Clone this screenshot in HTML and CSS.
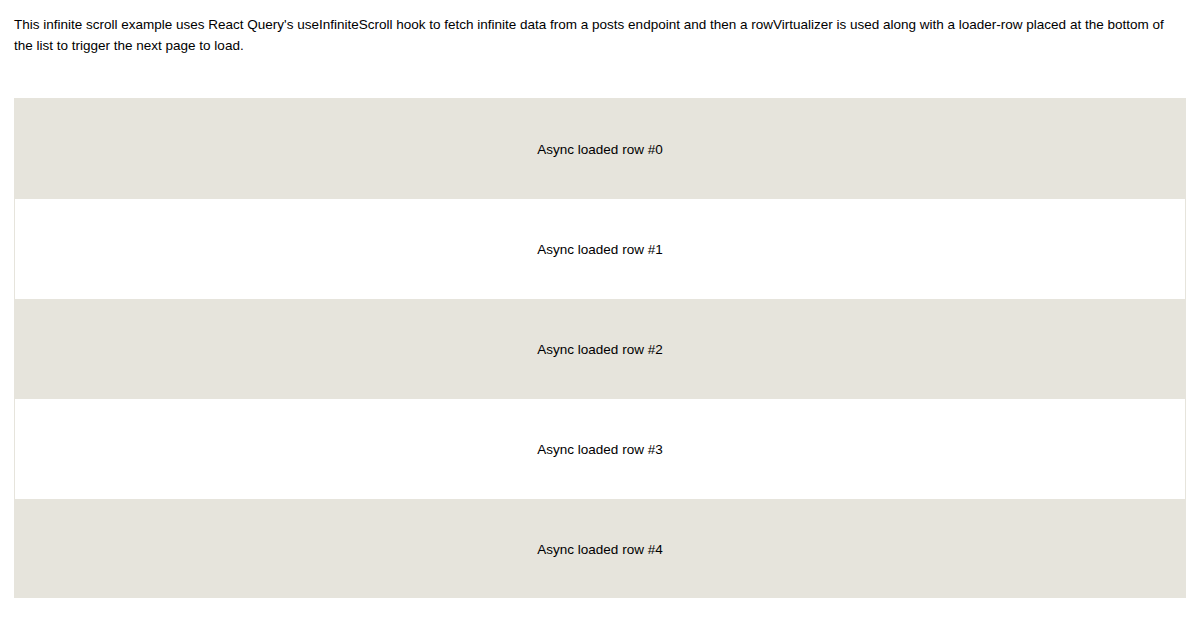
FILE: index.html
```html
<!DOCTYPE html>
<html>
<head>
<meta charset="utf-8">
<link rel="stylesheet" href="styles.css">
</head>
<body>
<p class="intro">This infinite scroll example uses React Query's useInfiniteScroll hook to fetch infinite data from a posts endpoint and then a rowVirtualizer is used along with a loader-row placed at the bottom of the list to trigger the next page to load.</p>
<div class="list">
  <div class="row odd">Async loaded row #0</div>
  <div class="row even">Async loaded row #1</div>
  <div class="row odd">Async loaded row #2</div>
  <div class="row even">Async loaded row #3</div>
  <div class="row odd">Async loaded row #4</div>
</div>
</body>
</html>
```
FILE: styles.css
```css
html, body {
  margin: 0;
  background: #fff;
}
body {
  padding: 14px;
  font-family: "Liberation Sans", Arial, sans-serif;
  font-size: 13.5px;
  line-height: 21px;
  color: #000;
}
.intro {
  margin: 0 0 42px 0;
}
.list {
  border: 1px solid #e6e4dc;
  height: 498px;
  overflow: hidden;
  display: flex;
  flex-direction: column;
}
.row {
  height: 100px;
  flex: 0 0 100px;
  display: flex;
  align-items: center;
  justify-content: center;
}
.odd {
  background: #e6e4dc;
}
.even {
  background: #fff;
}
```
